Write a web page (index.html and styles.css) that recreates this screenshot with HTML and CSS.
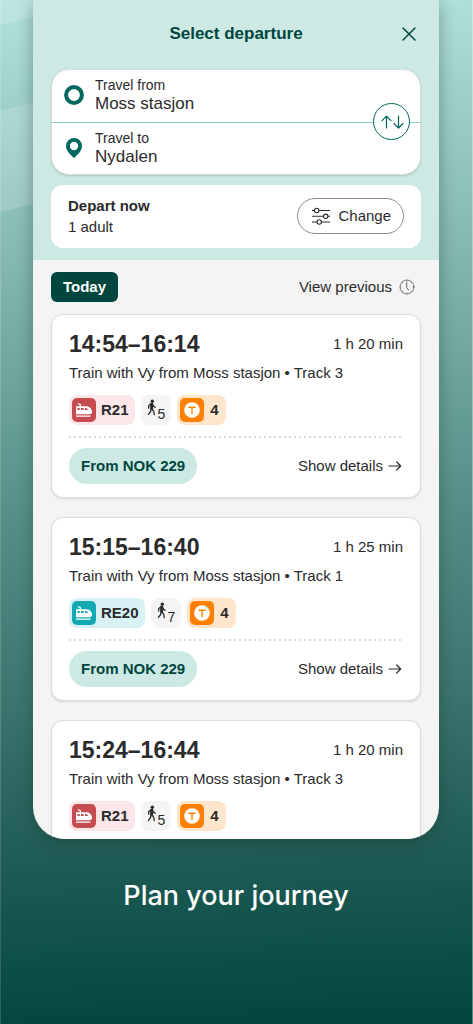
FILE: index.html
```html
<!DOCTYPE html>
<html lang="en">
<head>
<meta charset="utf-8">
<meta name="viewport" content="width=device-width, initial-scale=1">
<title>Select departure</title>
<link rel="stylesheet" href="styles.css">
</head>
<body>
<svg class="sprite" aria-hidden="true">
  <symbol id="train" viewBox="0 0 24 24">
    <path fill="currentColor" fill-rule="evenodd" d="M4 8.300h3.600V6.900L5.600 6l.4-1 3 1.300v2h5.500c2.600 0 4.600 2 5.400 4.200.6 1.800-.1 3.700-2 3.700H4zM5.400 10v2h2.300v-2zM9 10v2h2.600v-2zM13 10v2h3.300c-.6-1.200-1.500-2-2.600-2z"/>
    <path fill="currentColor" d="M4 17.400h14.500v1.300H4z"/>
  </symbol>
  <symbol id="metro" viewBox="0 0 24 24">
    <circle cx="12" cy="12" r="7.800" fill="#fff"/>
    <path d="M8.500 9.200h7M12 9.200v6.800" fill="none" stroke="#ff8000" stroke-width="1.400"/>
  </symbol>
  <symbol id="walk" viewBox="0 0 10 18">
    <circle cx="5.300" cy="2.200" r="1.700" fill="currentColor"/>
    <path d="M3.600 4.700 5.600 4.600l.7 2.500 1.900 1.200M3.600 4.900 1.700 6.800v2.400M4.900 5v5l1.800 2.400.6 3.200M4.300 9.600 3.600 12.500l-2.200 2.900" fill="none" stroke="currentColor" stroke-width="1.300" stroke-linecap="round" stroke-linejoin="round"/>
    <path d="M3.200 4.500h2.800l.2 5.900H3.100z" fill="currentColor"/>
  </symbol>
  <symbol id="arrow" viewBox="0 0 14 12">
    <path d="M1 6h11.500M8.700 2l4 4-4 4" fill="none" stroke="currentColor" stroke-width="1.200" stroke-linecap="round" stroke-linejoin="round"/>
  </symbol>
</svg>
<div class="stage">
  <svg class="rays" viewBox="0 0 34 320" aria-hidden="true">
    <path d="M0 0h34v17L0 25z" fill="#fff" fill-opacity=".16"/>
    <path d="M0 111l34-9v102L0 212z" fill="#fff" fill-opacity=".16"/>
  </svg>
  <main class="phone">
    <header class="top">
      <div class="titlebar">
        <h1 class="title">Select departure</h1>
        <button class="close" type="button" aria-label="Close">
          <svg class="close-icon" viewBox="0 0 14 14"><path d="M1 1l12 12M13 1L1 13" fill="none" stroke="currentColor" stroke-width="1.500" stroke-linecap="round"/></svg>
        </button>
      </div>
      <div class="route">
        <button class="place" type="button">
          <svg class="place-icon" viewBox="0 0 20 20"><circle cx="10" cy="10" r="7.900" fill="none" stroke="currentColor" stroke-width="4"/></svg>
          <span class="place-text"><span class="label">Travel from</span><span class="value">Moss stasjon</span></span>
        </button>
        <button class="place" type="button">
          <svg class="place-icon" viewBox="0 0 20 20"><path fill="currentColor" fill-rule="evenodd" d="M10 0a8 8 0 0 1 8 8c0 4.500-4 8.500-8 12C6 16.500 2 12.500 2 8a8 8 0 0 1 8-8zm0 3.800a4.200 4.200 0 1 0 0 8.400 4.200 4.200 0 0 0 0-8.400z"/></svg>
          <span class="place-text"><span class="label">Travel to</span><span class="value">Nydalen</span></span>
        </button>
        <button class="swap" type="button" aria-label="Swap stops">
          <svg class="swap-icon" viewBox="0 0 24 16"><path d="M6.500 14V2.200M2 6.700l4.500-4.500L11 6.700M18.500 2v12M14 9.500l4.500 4.500L23 9.500" fill="none" stroke="currentColor" stroke-width="1.200" stroke-linecap="round" stroke-linejoin="round"/></svg>
        </button>
      </div>
      <div class="options">
        <div class="when"><strong>Depart now</strong><span>1 adult</span></div>
        <button class="change" type="button">
          <svg class="change-icon" viewBox="0 0 18 18"><g fill="none" stroke="currentColor" stroke-width="1.100"><path d="M0 3.500h2.500M7 3.500h11M0 9.300h11.500M16 9.300h2M0 15h5M9.500 15H18"/><circle cx="4.700" cy="3.500" r="2.200"/><circle cx="13.700" cy="9.300" r="2.200"/><circle cx="7.200" cy="15" r="2.200"/></g></svg>
          Change
        </button>
      </div>
    </header>
    <section class="results">
      <div class="day">
        <h2 class="today">Today</h2>
        <button class="previous" type="button">View previous
          <svg class="clock" viewBox="0 0 16 16"><g fill="none" stroke="currentColor" stroke-linecap="round"><circle cx="8" cy="8" r="7" stroke-width=".9"/><path stroke-width="1" d="M7.700 3.500v5l2 2.700"/><path stroke-width=".7" d="M8 1.500v.6M8 13.900v.6M1.500 8h.6M13.900 8h.6M3.400 3.400l.4.4M12.600 3.400l-.4.4M3.400 12.600l.4-.4M12.600 12.600l-.4-.4"/></g></svg>
        </button>
      </div>
      <article class="trip">
        <div class="row"><h3 class="time">14:54–16:14</h3><span class="duration">1 h 20 min</span></div>
        <p class="desc">Train with Vy from Moss stasjon • Track 3</p>
        <div class="legs">
          <span class="leg red"><svg class="mode"><use href="#train"/></svg>R21</span>
          <span class="leg walk"><svg class="walker"><use href="#walk"/></svg><span class="minutes">5</span></span>
          <span class="leg orange"><svg class="mode"><use href="#metro"/></svg>4</span>
        </div>
        <div class="row foot"><button class="price" type="button">From NOK 229</button><a class="details" href="#">Show details <svg class="arrow"><use href="#arrow"/></svg></a></div>
      </article>
      <article class="trip">
        <div class="row"><h3 class="time">15:15–16:40</h3><span class="duration">1 h 25 min</span></div>
        <p class="desc">Train with Vy from Moss stasjon • Track 1</p>
        <div class="legs">
          <span class="leg teal"><svg class="mode"><use href="#train"/></svg>RE20</span>
          <span class="leg walk"><svg class="walker"><use href="#walk"/></svg><span class="minutes">7</span></span>
          <span class="leg orange"><svg class="mode"><use href="#metro"/></svg>4</span>
        </div>
        <div class="row foot"><button class="price" type="button">From NOK 229</button><a class="details" href="#">Show details <svg class="arrow"><use href="#arrow"/></svg></a></div>
      </article>
      <article class="trip last">
        <div class="row"><h3 class="time">15:24–16:44</h3><span class="duration">1 h 20 min</span></div>
        <p class="desc">Train with Vy from Moss stasjon • Track 3</p>
        <div class="legs">
          <span class="leg red"><svg class="mode"><use href="#train"/></svg>R21</span>
          <span class="leg walk"><svg class="walker"><use href="#walk"/></svg><span class="minutes">5</span></span>
          <span class="leg orange"><svg class="mode"><use href="#metro"/></svg>4</span>
        </div>
      </article>
    </section>
  </main>
  <p class="caption">Plan your journey</p>
</div>
</body>
</html>
```
FILE: styles.css
```css
* { box-sizing: border-box; }
body, h1, h2, h3, p { margin: 0; }
body {
  font-family: "Liberation Sans", Arial, sans-serif;
  font-size: 15px;
  line-height: 20px;
  color: #2b2b2c;
}
button {
  font: inherit;
  color: inherit;
  background: none;
  border: 0;
  padding: 0;
}
a { color: inherit; text-decoration: none; }
svg { display: block; flex: none; }
.sprite { position: absolute; width: 0; height: 0; }

.stage {
  position: relative;
  min-height: 100vh;
  padding: 0 34px 0 33px;
  background: linear-gradient(178deg, #b2e2dc 0, #82b6ae 26%, #548f87 50%, #39756d 68%, #1d5a53 84%, #00463e 100%);
  box-shadow: inset 1px 0 rgba(255, 255, 255, .15), inset -1px 0 rgba(255, 255, 255, .35);
}
.rays { position: absolute; left: 0; top: 0; width: 34px; height: 320px; }

.phone {
  position: relative;
  overflow: hidden;
  border-radius: 0 0 32px 32px;
  background: #f4f4f4;
  box-shadow: 0 4px 16px rgba(30, 50, 45, .4);
}
.top { padding: 19px 18px 12px; background: #cce9e3; }
.titlebar {
  display: grid;
  grid-template-columns: 24px 1fr 24px;
  align-items: center;
  height: 30px;
}
.title {
  grid-column: 2;
  text-align: center;
  font-size: 17px;
  line-height: 24px;
  color: #00463e;
}
.close { display: grid; place-items: center; height: 24px; color: #00463e; }
.close-icon { width: 14px; height: 14px; }

.route {
  position: relative;
  margin-top: 20px;
  background: #fff;
  border: 1px solid #d8dcda;
  border-radius: 18px;
  box-shadow: 0 1px 2px rgba(0, 0, 0, .15);
}
.place {
  display: flex;
  align-items: center;
  gap: 11px;
  width: 100%;
  height: 52px;
  padding: 0 0 2px 12px;
  text-align: left;
}
.place + .place { border-top: 1px solid #8fcabf; }
.place-icon { width: 20px; height: 20px; color: #00685e; }
.place-text { display: grid; }
.label { font-size: 14px; line-height: 17px; }
.value { font-size: 17px; line-height: 19px; }
.swap {
  position: absolute;
  right: 10px;
  top: 33px;
  display: grid;
  place-items: center;
  width: 37px;
  height: 37px;
  border: 1px solid #00685e;
  border-radius: 50%;
  background: #fff;
  color: #00685e;
}
.swap-icon { width: 24px; height: 16px; }

.options {
  display: flex;
  align-items: center;
  justify-content: space-between;
  margin-top: 10px;
  padding: 10px 17px 11px;
  border-radius: 12px;
  background: #fff;
}
.when { display: grid; line-height: 21px; }
.change {
  display: flex;
  align-items: center;
  gap: 8px;
  height: 36px;
  padding: 0 12px 0 14px;
  border: 1px solid #8a8b8c;
  border-radius: 18px;
}
.change-icon { width: 18px; height: 18px; }

.results { display: grid; gap: 19px; padding: 12px 18px 0; }
.day {
  display: flex;
  align-items: center;
  justify-content: space-between;
  margin-bottom: -7px;
}
.today {
  padding: 5px 12px;
  border-radius: 6px;
  background: #00463e;
  color: #fff;
  font-size: 15px;
  line-height: 20px;
}
.previous { display: flex; align-items: center; gap: 7px; margin-right: 6px; }
.clock { width: 16px; height: 16px; color: #666; }

.trip {
  padding: 14px 17px 13px;
  background: #fff;
  border: 1px solid #dcdcdc;
  border-radius: 12px;
  box-shadow: 0 1px 2px rgba(0, 0, 0, .12);
}
.trip.last { padding-bottom: 8px; border-bottom: 0; border-radius: 12px 12px 0 0; }
.row { display: flex; align-items: center; justify-content: space-between; }
.time { font-size: 23px; line-height: 30px; }
.desc { margin-top: 3px; line-height: 22px; }
.legs { display: flex; gap: 6px; margin-top: 11px; }
.leg {
  display: flex;
  align-items: center;
  gap: 5px;
  height: 30px;
  padding: 0 6px 0 3px;
  border-radius: 8px;
  font-weight: bold;
}
.mode { width: 24px; height: 24px; border-radius: 5px; color: #fff; }
.red { background: #fbe6e9; }
.red .mode { background: #c74c50; }
.teal { background: #d8f1f4; }
.teal .mode { background: #12a9b2; }
.orange { gap: 6px; padding-right: 7px; background: #ffe5cc; }
.orange .mode { background: #ff8000; }
.leg.walk { gap: 1px; padding: 0 6px; background: #f4f4f4; font-weight: normal; }
.walker { width: 10px; height: 18px; margin-bottom: 4px; }
.minutes { font-size: 14px; line-height: 16px; padding-top: 8px; }
.foot {
  margin-top: 11px;
  padding-top: 12px;
  background: repeating-linear-gradient(90deg, #dadada 0 2px, transparent 2px 5px) top / 100% 2px no-repeat;
}
.price {
  height: 36px;
  padding: 0 12px;
  border-radius: 18px;
  background: #cce9e3;
  color: #00463e;
  font-weight: bold;
}
.details { display: flex; align-items: center; gap: 5px; margin-right: 1px; }
.arrow { width: 14px; height: 12px; }

.caption {
  margin-top: 39px;
  text-align: center;
  color: #fff;
  font-family: Inter, "Liberation Sans", sans-serif;
  font-size: 27px;
  font-weight: 500;
  line-height: 36px;
}
```
